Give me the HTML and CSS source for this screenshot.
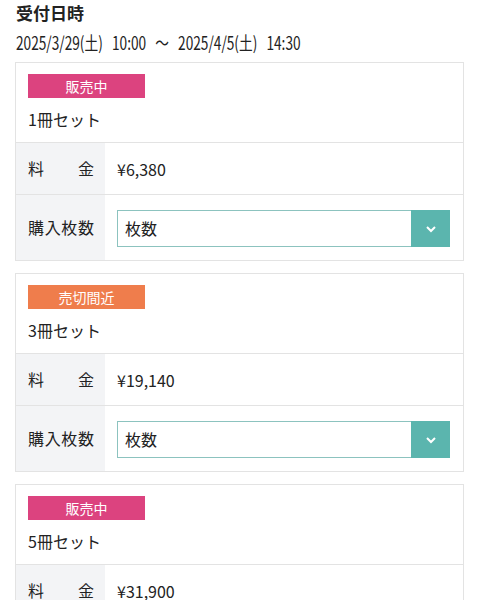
FILE: index.html
```html
<!DOCTYPE html>
<html lang="ja">
<head>
  <meta charset="UTF-8" />
  <meta name="viewport" content="width=device-width, initial-scale=1" />
  <title>受付日時</title>
  <link rel="stylesheet" href="styles.css">
</head>
<body>
  <div class="period">
    <h2 class="period-title">受付日時</h2>
    <p class="period-date"><span>2025/3/29(土) 10:00 〜 2025/4/5(土) 14:30</span></p>
  </div>

  <div class="set-card">
    <div class="set-head">
      <span class="badge badge-sale">販売中</span>
      <div class="set-name">1冊セット</div>
    </div>
    <div class="set-row">
      <div class="set-label">料金</div>
      <div class="set-value">¥6,380</div>
    </div>
    <div class="set-row set-row-select">
      <div class="set-label">購入枚数</div>
      <div class="set-value">
        <div class="qty-select">
          <span class="qty-text">枚数</span>
          <span class="qty-btn">
            <svg width="12" height="8" viewBox="0 0 12 8"><path d="M2 2l4 4 4-4" fill="none" stroke="#fff" stroke-width="2"/></svg>
          </span>
        </div>
      </div>
    </div>
  </div>

  <div class="set-card">
    <div class="set-head">
      <span class="badge badge-few">売切間近</span>
      <div class="set-name">3冊セット</div>
    </div>
    <div class="set-row">
      <div class="set-label">料金</div>
      <div class="set-value">¥19,140</div>
    </div>
    <div class="set-row set-row-select">
      <div class="set-label">購入枚数</div>
      <div class="set-value">
        <div class="qty-select">
          <span class="qty-text">枚数</span>
          <span class="qty-btn">
            <svg width="12" height="8" viewBox="0 0 12 8"><path d="M2 2l4 4 4-4" fill="none" stroke="#fff" stroke-width="2"/></svg>
          </span>
        </div>
      </div>
    </div>
  </div>

  <div class="set-card">
    <div class="set-head">
      <span class="badge badge-sale">販売中</span>
      <div class="set-name">5冊セット</div>
    </div>
    <div class="set-row">
      <div class="set-label">料金</div>
      <div class="set-value">¥31,900</div>
    </div>
    <div class="set-row set-row-select">
      <div class="set-label">購入枚数</div>
      <div class="set-value">
        <div class="qty-select">
          <span class="qty-text">枚数</span>
          <span class="qty-btn">
            <svg width="12" height="8" viewBox="0 0 12 8"><path d="M2 2l4 4 4-4" fill="none" stroke="#fff" stroke-width="2"/></svg>
          </span>
        </div>
      </div>
    </div>
  </div>
</body>
</html>
```

FILE: styles.css
```css
:root {
  --border: #e3e3e3;
  --label-bg: #f3f4f6;
  --text: #222;
  --pink: #dc437f;
  --orange: #ef7d4c;
  --teal: #5bb5ae;
}

* {
  box-sizing: border-box;
}

body {
  margin: 0;
  padding: 0 16px 0 15px;
  background: #fff;
  color: var(--text);
  font-family: "Noto Sans CJK JP", "Noto Sans", sans-serif;
  font-size: 16px;
}

.period {
  padding-left: 1px;
}

.period-title {
  margin: 0;
  padding-top: 1px;
  font-size: 17px;
  font-weight: 700;
  line-height: 24px;
}

.period-date {
  margin: 4px 0 0;
  height: 26px;
  line-height: 26px;
  font-size: 18px;
  white-space: nowrap;
}

.period-date span {
  display: inline-block;
  transform: scaleX(0.76);
  transform-origin: left center;
  word-spacing: 8px;
}

.set-card {
  margin-top: 7px;
  border: 1px solid var(--border);
  background: #fff;
}

.set-card + .set-card {
  margin-top: 12px;
}

.set-head {
  padding: 11px 12px 8px;
  border-bottom: 1px solid var(--border);
}

.badge {
  display: block;
  width: 117px;
  height: 24px;
  line-height: 24px;
  text-align: center;
  color: #fff;
  font-size: 14px;
}

.badge-sale {
  background: var(--pink);
}

.badge-few {
  background: var(--orange);
}

.set-name {
  margin-top: 7px;
  line-height: 29px;
  font-size: 16px;
}

.set-row {
  display: flex;
  min-height: 51px;
  border-bottom: 1px solid var(--border);
}

.set-row:last-child {
  border-bottom: none;
}

.set-row-select {
  min-height: 65px;
}

/* 料金 is spread over the same width as 購入枚数 */
.set-label {
  flex: 0 0 89px;
  padding: 0 11px 0 12px;
  background: var(--label-bg);
  line-height: 51px;
  text-align: justify;
  text-align-last: justify;
}

.set-row-select .set-label {
  line-height: 65px;
}

.set-value {
  flex: 1;
  display: flex;
  align-items: center;
  padding: 0 13px 0 12px;
}

.qty-select {
  flex: 1;
  display: flex;
  height: 37px;
  margin-top: 2px;
  border: 1px solid #8cc3bf;
  border-right: none;
}

.qty-text {
  flex: 1;
  padding-left: 7px;
  line-height: 35px;
}

.qty-btn {
  flex: 0 0 39px;
  margin: -1px 0;
  background: var(--teal);
  display: flex;
  align-items: center;
  justify-content: center;
}
```
